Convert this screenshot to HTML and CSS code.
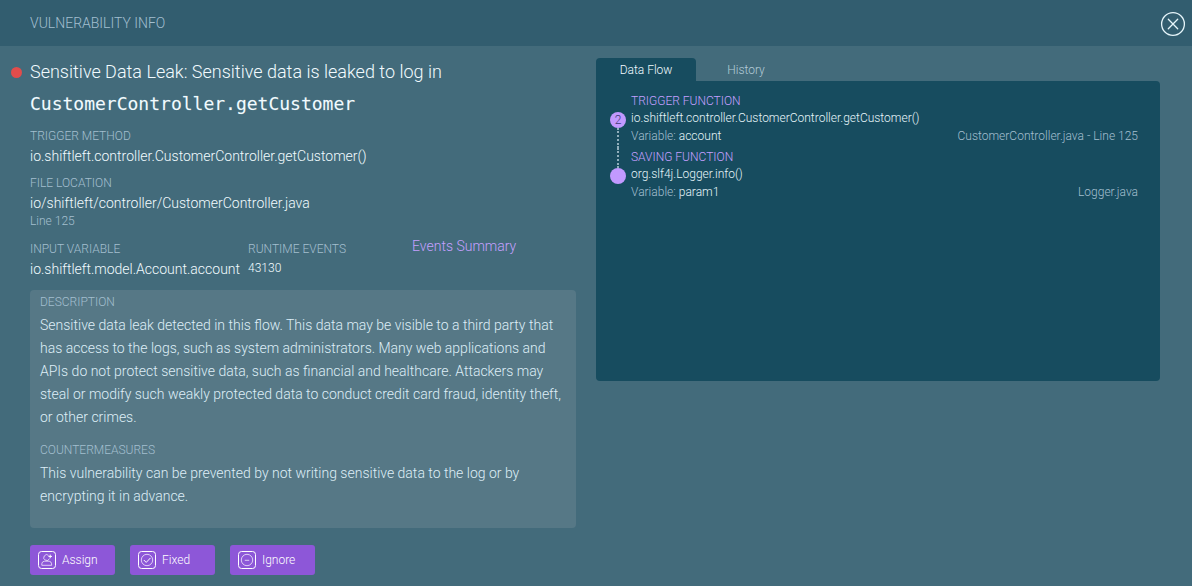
FILE: index.html
```html
<!DOCTYPE html>
<html lang="en">
<head>
<meta charset="utf-8">
<title>Vulnerability Info</title>
<link rel="stylesheet" href="styles.css">
</head>
<body>
<header class="topbar">
  <h1 class="topbar-title">VULNERABILITY INFO</h1>
  <button class="close" type="button" aria-label="Close">
    <svg width="26" height="26" viewBox="0 0 26 26" fill="none" stroke="currentColor" stroke-linecap="round">
      <circle cx="13" cy="13" r="11.4" stroke-width="1.3"/>
      <path d="M8.3 8.3l9.4 9.4M17.7 8.3l-9.4 9.4" stroke-width="1.3"/>
    </svg>
  </button>
</header>
<main class="layout">
  <section class="details">
    <h2 class="title"><span class="severity"></span>Sensitive Data Leak: Sensitive data is leaked to log in <code class="title-code">CustomerController.getCustomer</code></h2>
    <dl class="field">
      <dt class="label">TRIGGER METHOD</dt>
      <dd class="value">io.shiftleft.controller.CustomerController.getCustomer()</dd>
    </dl>
    <dl class="field">
      <dt class="label">FILE LOCATION</dt>
      <dd class="value">io/shiftleft/controller/CustomerController.java</dd>
      <dd class="note">Line 125</dd>
    </dl>
    <div class="stats">
      <dl class="field">
        <dt class="label">INPUT VARIABLE</dt>
        <dd class="value">io.shiftleft.model.Account.account</dd>
      </dl>
      <dl class="field events">
        <dt class="label">RUNTIME EVENTS</dt>
        <dd class="value value-small">43130</dd>
      </dl>
      <a class="summary" href="#">Events Summary</a>
    </div>
    <div class="card">
      <h3 class="label">DESCRIPTION</h3>
      <p class="text">Sensitive data leak detected in this flow. This data may be visible to a third party that has access to the logs, such as system administrators. Many web applications and APIs do not protect sensitive data, such as financial and healthcare. Attackers may steal or modify such weakly protected data to conduct credit card fraud, identity theft, or other crimes.</p>
      <h3 class="label">COUNTERMEASURES</h3>
      <p class="text">This vulnerability can be prevented by not writing sensitive data to the log or by encrypting it in advance.</p>
    </div>
    <div class="actions">
      <button class="action" type="button">
        <svg width="18" height="18" viewBox="0 0 18 18" fill="none" stroke="currentColor">
          <rect x=".5" y=".5" width="17" height="17" rx="3"/>
          <g stroke-width=".7"><path d="M10.6 4.4A2.9 2.9 0 1 0 11.4 7.6M3.8 14.3v-1.5q0-2 2.4-2.6h5q2.4.6 2.4 2.6v1.5z"/><path d="M12.2 3.6v3.6M10.4 5.4h3.6" stroke-width="1"/></g>
        </svg>Assign</button>
      <button class="action" type="button">
        <svg width="18" height="18" viewBox="0 0 18 18" fill="none" stroke="currentColor">
          <rect x=".5" y=".5" width="17" height="17" rx="3"/>
          <g stroke-width=".7"><circle cx="9" cy="9" r="5.7"/><path d="M5.8 9l2.4 2.4 4.3-4.5" stroke-width="1"/></g>
        </svg>Fixed</button>
      <button class="action" type="button">
        <svg width="18" height="18" viewBox="0 0 18 18" fill="none" stroke="currentColor">
          <rect x=".5" y=".5" width="17" height="17" rx="3"/>
          <g stroke-width=".7"><circle cx="9" cy="9" r="5.7"/><path d="M6.8 9.3h4.4"/></g>
        </svg>Ignore</button>
    </div>
  </section>
  <section class="flow">
    <div class="tabs" role="tablist">
      <button class="tab tab-active" type="button" role="tab" aria-selected="true">Data Flow</button>
      <button class="tab" type="button" role="tab" aria-selected="false">History</button>
    </div>
    <ol class="panel">
      <li class="step">
        <div class="rail"><span class="line line-hidden"></span><span class="dot">2</span><span class="line line-rest"></span></div>
        <div class="step-body">
          <h3 class="step-kind">TRIGGER FUNCTION</h3>
          <p class="step-name">io.shiftleft.controller.CustomerController.getCustomer()</p>
          <p class="step-meta"><span>Variable: <b class="step-var">account</b></span><span>CustomerController.java - Line 125</span></p>
        </div>
      </li>
      <li class="step">
        <div class="rail"><span class="line"></span><span class="dot"></span></div>
        <div class="step-body">
          <h3 class="step-kind">SAVING FUNCTION</h3>
          <p class="step-name">org.slf4j.Logger.info()</p>
          <p class="step-meta"><span>Variable: <b class="step-var">param1</b></span><span>Logger.java</span></p>
        </div>
      </li>
    </ol>
  </section>
</main>
</body>
</html>
```

FILE: styles.css
```css
* { box-sizing: border-box; }
body, h1, h2, h3, p, dl, dd, ol { margin: 0; padding: 0; font-weight: inherit; }
body {
  background: #436b7b;
  color: #f2fbff;
  font-family: Roboto, "Liberation Sans", sans-serif;
  font-size: 14px;
  font-weight: 300;
}
button { border: 0; padding: 0; background: none; color: inherit; font: inherit; cursor: pointer; }

.topbar {
  display: flex;
  align-items: center;
  justify-content: space-between;
  height: 46px;
  padding: 0 6px 0 30px;
  background: #325d6f;
}
.topbar-title { color: #a3bfcf; font-size: 14px; }
.close { display: flex; margin-top: 2px; color: #e6f5fa; }

.layout { display: grid; grid-template-columns: 1fr 1fr; }
.details { padding: 10px 20px 11px 30px; }
.title { position: relative; margin-bottom: 7px; font-size: 18px; line-height: 32px; }
.title-code { display: block; font: 400 18px/32px "DejaVu Sans Mono", monospace; -webkit-text-stroke: thin; -webkit-text-stroke-color: rgba(242, 251, 255, 0.3); }
.severity {
  position: absolute;
  left: -19px;
  top: 11px;
  width: 11px;
  height: 11px;
  border-radius: 50%;
  background: #e24c4b;
}

.field { margin-bottom: 7px; }
.label { color: #a3bfcf; font-size: 12px; line-height: 18px; }
.value { line-height: 22px; }
.value-small { font-size: 12px; line-height: 20px; }
.note { color: #a3bfcf; font-size: 12px; line-height: 14px; }
.stats { display: flex; padding-top: 5px; margin-bottom: 3px; }
.events { margin-left: 8px; }
.summary { margin: -3px 0 0 66px; color: #c5a0ff; line-height: 18px; text-decoration: none; }

.card { padding: 3px 10px 20px; border-radius: 4px; background: #567886; }
.text { margin-top: 3px; color: #deeef7; line-height: 23px; }
.text + .label { margin-top: 12px; }

.actions { display: flex; gap: 15px; margin-top: 17px; }
.action {
  display: flex;
  align-items: center;
  gap: 6px;
  width: 85px;
  height: 30px;
  padding-left: 8px;
  border-radius: 3px;
  background: #8d57d8;
  color: #ffffff;
  font-size: 12px;
}

.flow { padding: 12px 32px 0 0; }
.tabs { display: flex; }
.tab { width: 100px; height: 23px; color: #b4ccd8; font-size: 12px; }
.tab-active { border-radius: 4px 4px 0 0; background: #174c5f; color: #f2fbff; }
.panel {
  min-height: 300px;
  padding: 11px 22px 11px 14px;
  border-radius: 0 4px 4px 4px;
  background: #174c5f;
  list-style: none;
  font-size: 12px;
}
.step { display: flex; gap: 5px; }
.rail { display: flex; flex-direction: column; align-items: center; width: 16px; }
.line { height: 20px; border-left: 2px dotted #8faebb; }
.line-hidden { visibility: hidden; }
.line-rest { flex: 1; }
.dot {
  width: 16px;
  height: 16px;
  border-radius: 50%;
  background: #c299ff;
  color: #3f3a76;
  line-height: 16px;
  text-align: center;
}
.step-body { flex: 1; padding-bottom: 2px; }
.step-kind { color: #c5a0ff; font-size: 12px; line-height: 18px; }
.step-name { color: #e6f5fa; line-height: 16px; }
.step-meta { display: flex; justify-content: space-between; color: #a3bfcf; line-height: 20px; }
.step-var { color: #e6f5fa; font-weight: 300; }
```
